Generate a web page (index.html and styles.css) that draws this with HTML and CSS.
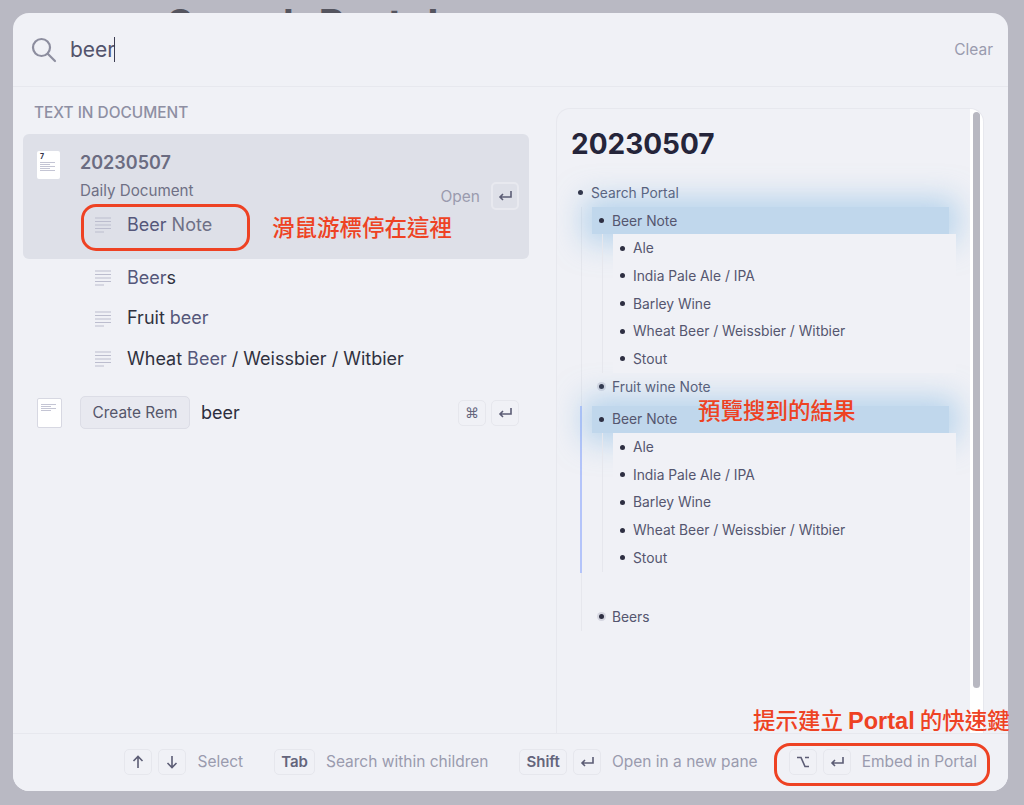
FILE: index.html
```html
<!DOCTYPE html>
<html lang="en">
<head>
    <meta charset="UTF-8" />
    <meta name="viewport" content="width=device-width, initial-scale=1.0" />
    <title>Search Portal</title>
    <link rel="stylesheet" href="styles.css">
</head>
<body>
    <div class="page-title">Search Portal</div>

    <div class="modal">
        <div class="search-bar">
            <svg class="search-icon" width="26" height="26" viewBox="0 0 26 26" fill="none" stroke="#8d8e9f" stroke-width="2.2" stroke-linecap="round">
                <circle cx="10.5" cy="10.5" r="8.5"></circle>
                <path d="M17 17l7 7"></path>
            </svg>
            <div class="query">beer<span class="caret"></span></div>
            <div class="clear">Clear</div>
        </div>

        <div class="content">
            <div class="results">
                <div class="section-title">TEXT IN DOCUMENT</div>

                <div class="doc-card">
                    <div class="doc-thumb"><b>7</b><i></i><i></i><i></i><i></i><i></i></div>
                    <div class="doc-main">
                        <div class="doc-title">20230507</div>
                        <div class="doc-sub">Daily Document</div>
                        <div class="hit-row hit-row-first">
                            <svg class="lines" width="16" height="16" viewBox="0 0 16 16"><path d="M0 1h16M0 4.500h16M0 8h16M0 11.500h16M0 15h9"></path></svg>
                            <span class="match">Beer</span>&nbsp;<span class="rest">Note</span>
                        </div>
                    </div>
                    <div class="open-hint">
                        <span>Open</span>
                        <span class="key key-dim">
                            <svg width="14" height="12" viewBox="0 0 14 12" class="key-icon"><path d="M13 1v6H2M5 4L2 7l3 3"></path></svg>
                        </span>
                    </div>
                </div>

                <div class="hit-row">
                    <svg class="lines" width="16" height="16" viewBox="0 0 16 16"><path d="M0 1h16M0 4.500h16M0 8h16M0 11.500h16M0 15h9"></path></svg>
                    <span class="match">Beer</span><span>s</span>
                </div>
                <div class="hit-row">
                    <svg class="lines" width="16" height="16" viewBox="0 0 16 16"><path d="M0 1h16M0 4.500h16M0 8h16M0 11.500h16M0 15h9"></path></svg>
                    <span>Fruit&nbsp;</span><span class="match">beer</span>
                </div>
                <div class="hit-row">
                    <svg class="lines" width="16" height="16" viewBox="0 0 16 16"><path d="M0 1h16M0 4.500h16M0 8h16M0 11.500h16M0 15h9"></path></svg>
                    <span>Wheat&nbsp;</span><span class="match">Beer</span><span>&nbsp;/ Weissbier / Witbier</span>
                </div>

                <div class="create-row">
                    <div class="doc-thumb doc-thumb-new"><i></i><i></i><i></i><i></i></div>
                    <div class="create-btn">Create Rem</div>
                    <div class="create-text">beer</div>
                    <div class="create-keys">
                        <span class="key key-glyph">⌘</span>
                        <span class="key">
                            <svg width="14" height="12" viewBox="0 0 14 12" class="key-icon"><path d="M13 1v6H2M5 4L2 7l3 3"></path></svg>
                        </span>
                    </div>
                </div>
            </div>

            <div class="preview">
                <h2>20230507</h2>
                <div class="rem"><span class="dot"></span>Search Portal</div>
                <div class="kids">
                    <div class="rem rem-hit"><span class="dot"></span>Beer Note</div>
                    <div class="kids kids-inner">
                        <div class="rem"><span class="dot"></span>Ale</div>
                        <div class="rem"><span class="dot"></span>India Pale Ale / IPA</div>
                        <div class="rem"><span class="dot"></span>Barley Wine</div>
                        <div class="rem"><span class="dot"></span>Wheat Beer / Weissbier / Witbier</div>
                        <div class="rem"><span class="dot"></span>Stout</div>
                    </div>
                    <div class="rem"><span class="dot dot-closed"></span>Fruit wine Note</div>

                    <div class="portal">
                        <div class="rem rem-hit"><span class="dot"></span>Beer Note</div>
                        <div class="kids kids-inner">
                            <div class="rem"><span class="dot"></span>Ale</div>
                            <div class="rem"><span class="dot"></span>India Pale Ale / IPA</div>
                            <div class="rem"><span class="dot"></span>Barley Wine</div>
                            <div class="rem"><span class="dot"></span>Wheat Beer / Weissbier / Witbier</div>
                            <div class="rem"><span class="dot"></span>Stout</div>
                        </div>
                    </div>

                    <div class="rem rem-last"><span class="dot dot-closed"></span>Beers</div>
                </div>
                <div class="scrollbar"></div>
            </div>
        </div>

        <div class="footer">
            <div class="shortcut">
                <div class="keys">
                    <span class="key"><svg width="12" height="14" viewBox="0 0 12 14" class="key-icon"><path d="M6 13V1.500M1.500 6L6 1.500 10.500 6"></path></svg></span>
                    <span class="key"><svg width="12" height="14" viewBox="0 0 12 14" class="key-icon"><path d="M6 1v11.500M1.500 8L6 12.500 10.500 8"></path></svg></span>
                </div>
                <span>Select</span>
            </div>
            <div class="shortcut">
                <span class="key key-text">Tab</span>
                <span>Search within children</span>
            </div>
            <div class="shortcut">
                <div class="keys">
                    <span class="key key-text">Shift</span>
                    <span class="key"><svg width="14" height="12" viewBox="0 0 14 12" class="key-icon"><path d="M13 1v6H2M5 4L2 7l3 3"></path></svg></span>
                </div>
                <span>Open in a new pane</span>
            </div>
            <div class="shortcut">
                <div class="keys">
                    <span class="key"><svg width="14" height="12" viewBox="0 0 14 12" class="key-icon"><path d="M1 1.500h4l4 9h4M9 1.500h4"></path></svg></span>
                    <span class="key"><svg width="14" height="12" viewBox="0 0 14 12" class="key-icon"><path d="M13 1v6H2M5 4L2 7l3 3"></path></svg></span>
                </div>
                <span>Embed in Portal</span>
            </div>
        </div>
    </div>

    <!-- red notes drawn on top of the screenshot -->
    <div class="mark mark-hover"></div>
    <div class="mark mark-embed"></div>
    <div class="note note-hover">滑鼠游標停在這裡</div>
    <div class="note note-preview">預覽搜到的結果</div>
    <div class="note note-embed">提示建立 <b>Portal</b> 的快速鍵</div>
</body>
</html>
```

FILE: styles.css
```css
:root {
    --backdrop: #b9b9c3;
    --panel: #f0f1f6;
    --line: #e7e8ee;
    --muted: #9a9bae;
    --text: #55566f;
    --red: #ee4223;
}

* {
    box-sizing: border-box;
    margin: 0;
    padding: 0;
}

html, body {
    height: 100%;
}

body {
    position: relative;
    overflow: hidden;
    font-family: 'Inter', sans-serif;
    background: var(--backdrop);
    padding: 13px 16px 14px 13px;
    color: var(--text);
}

.page-title {
    position: absolute;
    left: 167px;
    top: 0;
    font-size: 40px;
    font-weight: 700;
    line-height: 48px;
    color: #55555f;
    letter-spacing: 0.7px;
}

.modal {
    position: relative;
    isolation: isolate;
    height: 100%;
    display: flex;
    flex-direction: column;
    background: var(--panel);
    border-radius: 16px;
    overflow: hidden;
}

/* search bar */
.search-bar {
    height: 74px;
    flex: none;
    display: flex;
    align-items: center;
    padding: 0 15px 0 18px;
    border-bottom: 1px solid var(--line);
}

.search-icon {
    margin-right: 13px;
}

.query {
    font-size: 21px;
    color: #53546c;
    display: flex;
    align-items: center;
}

.caret {
    width: 1px;
    height: 25px;
    margin-left: -1px;
    background: #3c3d52;
}

.clear {
    margin-left: auto;
    font-size: 15.500px;
    color: var(--muted);
}

/* main area */
.content {
    flex: 1;
    display: flex;
    min-height: 0;
}

.results {
    width: 532px;
    flex: none;
    padding: 0 16px 0 10px;
}

.section-title {
    height: 47px;
    padding: 17px 0 0 11px;
    font-size: 15.400px;
    line-height: 18px;
    font-weight: 500;
    color: #8e8fa3;
}

.doc-card {
    height: 125px;
    display: flex;
    background: #dee0e8;
    border-radius: 6px;
    position: relative;
}

.doc-thumb {
    width: 23px;
    height: 28px;
    flex: none;
    margin: 17px 0 0 14px;
    padding: 2px 3px;
    background: #fff;
    border-radius: 2px;
    font-size: 7px;
    line-height: 7px;
    color: #33344a;
}

.doc-thumb b {
    display: block;
    margin-bottom: 2px;
}

.doc-thumb i {
    display: block;
    width: 15px;
    height: 1px;
    margin-bottom: 1px;
    background: #c4c5d4;
}

.doc-thumb i:nth-of-type(2), .doc-thumb i:nth-of-type(4) {
    width: 10px;
}

.doc-thumb-new {
    width: 25px;
    height: 30px;
    margin: 0 18px 0 14px;
    padding-top: 5px;
    border: 1px solid #d7d8e2;
}

.doc-main {
    margin-left: 20px;
    padding-top: 16px;
}

.doc-title {
    font-size: 18px;
    line-height: 26px;
    font-weight: 600;
    color: #6b6c81;
}

.doc-sub {
    margin-top: 2px;
    font-size: 15.200px;
    line-height: 26px;
    color: #6f7085;
}

.open-hint {
    position: absolute;
    right: 10px;
    top: 48px;
    display: flex;
    align-items: center;
    gap: 11px;
    font-size: 15.500px;
    color: var(--muted);
}

.hit-row {
    height: 40.500px;
    display: flex;
    align-items: center;
    padding-left: 72px;
    font-size: 18px;
    color: #30313f;
}

.doc-card + .hit-row {
    margin-top: -2px;
}

.hit-row-first {
    padding-left: 15px;
    height: 40px;
    color: #6f7086;
}

.lines {
    flex: none;
    margin-right: 16px;
    margin-top: 2px;
    fill: none;
    stroke: #bcbdce;
    stroke-width: 1.200;
}

.match {
    color: #55577a;
}

.create-row {
    height: 34px;
    margin-top: 17px;
    display: flex;
    align-items: center;
}

.create-btn {
    height: 33px;
    width: 110px;
    flex: none;
    display: flex;
    align-items: center;
    justify-content: center;
    background: #e8e9f0;
    border: 1px solid #dcdde6;
    border-radius: 5px;
    font-size: 15.400px;
    color: #55566a;
}

.create-text {
    margin-left: 11px;
    font-size: 18px;
    color: #2d2e3d;
}

.create-keys {
    margin-left: auto;
    margin-right: 10px;
    display: flex;
    gap: 5px;
}

/* preview pane */
.preview {
    position: relative;
    width: 428px;
    flex: none;
    margin: 21px 0 0 11px;
    padding: 18px 0 0 14px;
    border: 1px solid var(--line);
    border-bottom: 0;
    border-radius: 14px 14px 0 0;
    font-size: 13.800px;
    overflow: hidden;
}

.preview h2 {
    font-size: 28px;
    line-height: 34px;
    font-weight: 700;
    color: #25253a;
    margin-bottom: 18px;
}

.rem {
    height: 27.700px;
    display: flex;
    align-items: center;
    position: relative;
}

.dot {
    width: 20px;
    flex: none;
    height: 5px;
    position: relative;
}

.dot::after {
    content: '';
    position: absolute;
    left: 7px;
    top: 0;
    width: 5px;
    height: 5px;
    border-radius: 50%;
    background: #2e2f42;
}

.dot-closed::before {
    content: '';
    position: absolute;
    left: 5px;
    top: -2px;
    width: 9px;
    height: 9px;
    border-radius: 50%;
    background: #d5d6e0;
}

.kids {
    margin-left: 10px;
    padding-left: 10px;
    border-left: 1px solid #e6e7ed;
    width: 375px;
}

.kids-inner {
    width: 354px;
    position: relative;
    z-index: 1;
}

.kids-inner .rem {
    background: var(--panel);
}

.rem-hit {
    width: 357px;
    background: #c0d7ec;
    box-shadow: 0 0 30px 8px rgba(120, 180, 225, 0.5);
}

.portal {
    margin-top: 5px;
    margin-left: -12px;
    padding-left: 10px;
    border-left: 2px solid #b4c4fa;
    height: 167px;
}

.rem-last {
    margin-top: 30.500px;
}

.scrollbar {
    position: absolute;
    right: 0;
    top: 0;
    bottom: 0;
    width: 13px;
    background: #fff;
    z-index: 2;
}

.scrollbar::after {
    content: '';
    position: absolute;
    left: 3px;
    top: 3px;
    bottom: 45px;
    width: 7px;
    border-radius: 4px;
    background: #b8b8c1;
}

/* footer */
.footer {
    height: 58px;
    flex: none;
    display: flex;
    align-items: center;
    justify-content: flex-end;
    gap: 31px;
    padding: 0 31px 2px 0;
    border-top: 1px solid var(--line);
    font-size: 15.500px;
    color: var(--muted);
    position: relative;
    background: var(--panel);
}

.shortcut {
    display: flex;
    align-items: center;
    gap: 11px;
}

.keys {
    display: flex;
    gap: 6px;
}

.key {
    min-width: 28px;
    height: 26px;
    display: inline-flex;
    align-items: center;
    justify-content: center;
    border: 1px solid #e6e7ed;
    border-radius: 5px;
    color: #64657c;
}

.key-dim {
    height: 28px;
    border: 2px solid #e8e9ef;
}

.key-text {
    padding: 0 6px;
    font-size: 15px;
    font-weight: 600;
}

.key-glyph {
    font-family: 'DejaVu Sans', sans-serif;
    font-size: 14px;
}

.key-icon {
    fill: none;
    stroke: #5c5d75;
    stroke-width: 1.600;
}

/* annotations */
.mark {
    position: absolute;
    border: 3px solid var(--red);
}

.mark-hover {
    left: 81px;
    top: 204px;
    width: 169px;
    height: 47px;
    border-radius: 15px;
}

.mark-embed {
    left: 774px;
    top: 743px;
    width: 216px;
    height: 43px;
    border-radius: 16px;
}

.note {
    position: absolute;
    font-family: 'Noto Sans CJK TC', sans-serif;
    font-size: 22.500px;
    line-height: 30px;
    font-weight: 500;
    color: var(--red);
    white-space: nowrap;
}

.note b {
    font-family: 'Liberation Sans', sans-serif;
    font-weight: 700;
    font-size: 23.500px;
}

.note-hover {
    left: 272px;
    top: 211px;
}

.note-preview {
    left: 698px;
    top: 394px;
}

.note-embed {
    left: 753px;
    top: 704px;
}
```
